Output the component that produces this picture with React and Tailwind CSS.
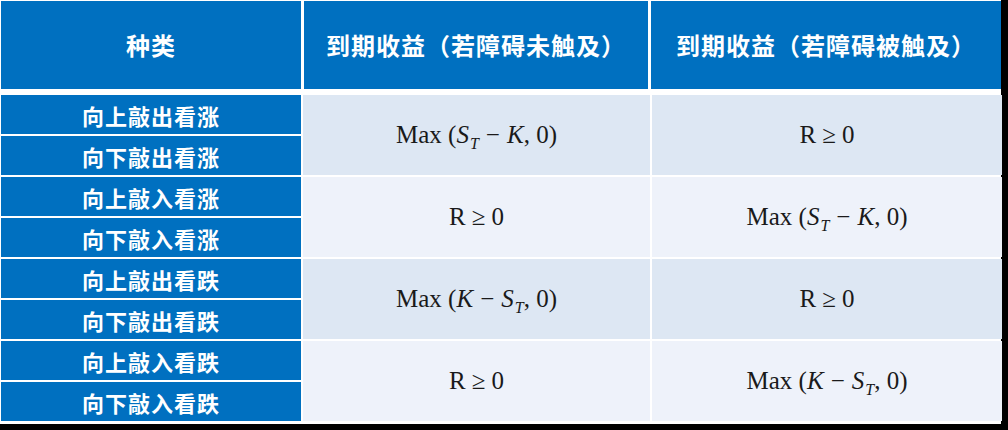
import React from "react";

const cjk = { fontFamily: '"Noto Sans CJK SC", "Noto Sans", sans-serif' };
const math = { fontFamily: '"Liberation Serif", "DejaVu Serif", serif' };

const kinds = [
  "向上敲出看涨",
  "向下敲出看涨",
  "向上敲入看涨",
  "向下敲入看涨",
  "向上敲出看跌",
  "向下敲出看跌",
  "向上敲入看跌",
  "向下敲入看跌",
];

function Sub() {
  return <sub className="relative top-[6px] ml-px text-[16px] italic">T</sub>;
}

function CallPay() {
  return (
    <span>
      Max (<i>S</i>
      <Sub />
      <span className="mx-[7px]">−</span>
      <i>K</i>, 0)
    </span>
  );
}

function PutPay() {
  return (
    <span>
      Max (<i>K</i>
      <span className="mx-[7px]">−</span>
      <i>S</i>
      <Sub />, 0)
    </span>
  );
}

function Zero() {
  return (
    <span>
      R<span className="mx-[6px]">≥</span>0
    </span>
  );
}

const pairs = [
  { a: <CallPay />, b: <Zero />, bg: "bg-[#dde7f3]" },
  { a: <Zero />, b: <CallPay />, bg: "bg-[#eef2fa]" },
  { a: <PutPay />, b: <Zero />, bg: "bg-[#dde7f3]" },
  { a: <Zero />, b: <PutPay />, bg: "bg-[#eef2fa]" },
];

export default function App() {
  return (
    <div className="h-[430px] w-[1008px] bg-black">
      <div className="flex h-[424px] w-[1001px] flex-col gap-[6px] bg-white p-px">
        <div className="grid h-[88px] grid-cols-[300px_344px_350px] gap-x-[3px]" style={cjk}>
          {["种类", "到期收益（若障碍未触及）", "到期收益（若障碍被触及）"].map((t) => (
            <div
              key={t}
              className="flex items-center justify-center bg-[#0070c0] text-[24px] font-bold tracking-[1px] text-white"
            >
              {t}
            </div>
          ))}
        </div>
        <div className="grid flex-1 grid-cols-[300px_347px_350px] gap-x-[2px]">
          <div className="flex flex-col gap-[2px]" style={cjk}>
            {kinds.map((k) => (
              <div
                key={k}
                className="flex h-[39px] items-center justify-center bg-[#0070c0] text-[22px] font-bold leading-none tracking-[1px] text-white"
              >
                {k}
              </div>
            ))}
          </div>
          {[0, 1].map((col) => (
            <div key={col} className="flex flex-col gap-[2px]" style={math}>
              {pairs.map((p, i) => (
                <div
                  key={i}
                  className={`flex h-[80px] items-center justify-center text-[25px] text-[#1a1a1a] ${p.bg}`}
                >
                  {col === 0 ? p.a : p.b}
                </div>
              ))}
            </div>
          ))}
        </div>
      </div>
    </div>
  );
}
